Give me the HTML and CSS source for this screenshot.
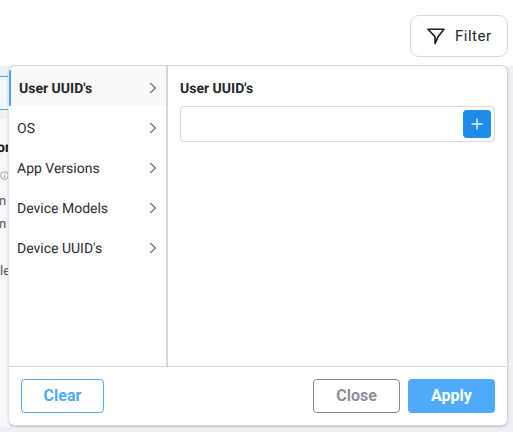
FILE: index.html
```html
<!DOCTYPE html>
<html lang="en">
<head>
<meta charset="utf-8">
<title>Filter</title>
<link rel="stylesheet" href="styles.css">
</head>
<body>
<div class="backdrop">
  <div class="left-fill"></div>
  <div class="tab-edge"></div>
  <span class="peek p1">or</span>
  <span class="peek p2">n</span>
  <span class="peek p3">n</span>
  <span class="peek p4">le</span>
  <svg class="peek info" width="9" height="9" viewBox="0 0 9 9"><circle cx="4.5" cy="4.5" r="3.9" fill="none" stroke="#8a8f98" stroke-width=".8"/><path d="M4.5 4V7M4.5 2.2v.9" stroke="#8a8f98" stroke-width=".8"/></svg>
</div>
<header class="topbar">
  <button class="filter-btn">
    <svg width="18" height="17" viewBox="0 0 18 17"><path d="M1 1.2H17L11.2 8.4L8 15.6V8.6Z" fill="none" stroke="#1b1d21" stroke-width="1.6" stroke-linejoin="round"/></svg>
    <span>Filter</span>
  </button>
</header>
<section class="panel">
  <div class="panel-body">
    <nav class="menu">
      <div class="item active"><span>User UUID's</span><svg class="chev" width="8" height="12" viewBox="0 0 8 12"><path d="M1.2 1L6.4 6L1.2 11" /></svg></div>
      <div class="item"><span>OS</span><svg class="chev" width="8" height="12" viewBox="0 0 8 12"><path d="M1.2 1L6.4 6L1.2 11" /></svg></div>
      <div class="item"><span>App Versions</span><svg class="chev" width="8" height="12" viewBox="0 0 8 12"><path d="M1.2 1L6.4 6L1.2 11" /></svg></div>
      <div class="item"><span>Device Models</span><svg class="chev" width="8" height="12" viewBox="0 0 8 12"><path d="M1.2 1L6.4 6L1.2 11" /></svg></div>
      <div class="item"><span>Device UUID's</span><svg class="chev" width="8" height="12" viewBox="0 0 8 12"><path d="M1.2 1L6.4 6L1.2 11" /></svg></div>
    </nav>
    <div class="detail">
      <div class="detail-title">User UUID's</div>
      <div class="field">
        <button class="add"><svg width="12" height="12" viewBox="0 0 12 12"><path d="M6 .5V11.5M.5 6H11.5" stroke="#e6f2fd" stroke-width="1.4"/></svg></button>
      </div>
    </div>
  </div>
  <footer class="panel-foot">
    <button class="btn clear">Clear</button>
    <div class="foot-right">
      <button class="btn close">Close</button>
      <button class="btn apply">Apply</button>
    </div>
  </footer>
</section>
</body>
</html>
```
FILE: styles.css
```css
* { box-sizing: border-box; }
html, body { margin: 0; height: 100%; }
body {
  width: 513px;
  height: 432px;
  overflow: hidden;
  position: relative;
  background: #fff;
  font-family: Roboto, "Liberation Sans", sans-serif;
  color: #24272c;
  text-rendering: geometricPrecision;
}
.backdrop {
  position: absolute;
  left: 0; right: 0; top: 66px; bottom: 0;
  background: #eef0f4;
}
.left-fill {
  position: absolute;
  left: 0; top: 53px;
  width: 9px; height: 308px;
  background: #f6f7f9;
}
.tab-edge {
  position: absolute;
  left: 0; top: 10px;
  width: 9px; height: 34px;
  background: #f4f5f7;
  border-top: 1px solid #4aa8fa;
  border-bottom: 1px solid #4aa8fa;
}
.peek { position: absolute; font-size: 13px; color: #54585f; line-height: 14px; }
.p1 { left: -3px; top: 75px; font-weight: 700; font-size: 14px; color: #111; }
.p2 { left: -1px; top: 129px; }
.p3 { left: -1px; top: 152px; }
.p4 { left: 0; top: 199px; }
.info { left: 0; top: 105px; }
.topbar {
  height: 66px;
  padding: 15px 5px 0 0;
  display: flex;
  justify-content: flex-end;
  align-items: flex-start;
  position: relative;
}
.filter-btn {
  width: 98px;
  height: 42px;
  display: flex;
  align-items: center;
  gap: 10px;
  padding: 0 0 0 16px;
  background: #fff;
  border: 1px solid #d5d8df;
  border-radius: 9px;
  font: 400 15px Roboto, sans-serif;
  letter-spacing: .5px;
  color: #24272c;
}
.panel {
  position: absolute;
  left: 8px; top: 65px;
  width: 500px; height: 361px;
  background: #fff;
  border: 1px solid #d3d6de;
  border-left: 1px solid #e4e6eb;
  border-radius: 7px;
  box-shadow: 0 1px 2px rgba(80,85,100,.25);
  display: flex;
  flex-direction: column;
  overflow: hidden;
}
.panel-body { flex: 1; display: flex; min-height: 0; }
.menu {
  width: 159px;
  border-right: 2px solid #d3d6de;
  padding-top: 4px;
  display: flex;
  flex-direction: column;
  gap: 4px;
}
.item {
  height: 36px;
  display: flex;
  align-items: center;
  justify-content: space-between;
  padding: 0 9px 0 8px;
  font-size: 14px;
  color: #2b2e33;
}
.item span { margin-top: 2px; }
.item.active {
  background: #f8f8f9;
  border-left: 2px solid #4aa8fa;
  font-weight: 700;
  color: #24272c;
}
.chev { fill: none; stroke: #7b7f87; stroke-width: 1.5; }
.detail { flex: 1; padding: 15px 12px 0 12px; }
.detail-title { font-size: 14px; font-weight: 700; line-height: 16px; color: #24272c; }
.field {
  margin-top: 9px;
  height: 36px;
  border: 1px solid #d3d6de;
  border-radius: 4px;
  display: flex;
  justify-content: flex-end;
  align-items: center;
  padding-right: 3px;
}
.add {
  width: 28px; height: 28px;
  border: 0; padding: 0;
  border-radius: 4px;
  background: #1f8ceb;
  display: flex;
  align-items: center;
  justify-content: center;
}
.panel-foot {
  height: 59px;
  border-top: 1px solid #d3d6de;
  padding: 12px 12px 0 12px;
  display: flex;
  justify-content: space-between;
  align-items: flex-start;
}
.foot-right { display: flex; gap: 8px; }
.btn {
  height: 34px;
  border-radius: 4px;
  font: 700 16px Roboto, sans-serif;
  background: #fff;
  padding: 0 0 1px;
}
.clear { width: 83px; border: 1px solid #4fabfa; color: #4fabfa; }
.close { width: 87px; border: 1px solid #84888f; color: #8b8f96; }
.apply { width: 87px; border: 0; background: #4fabfa; color: #fff; }
```
